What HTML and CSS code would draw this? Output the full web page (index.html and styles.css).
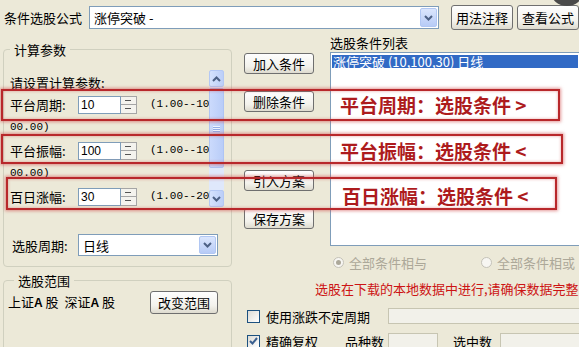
FILE: index.html
```html
<!DOCTYPE html>
<html lang="zh-CN">
<head>
    <meta charset="UTF-8" />
    <title>条件选股</title>
    <link rel="stylesheet" href="styles.css">
</head>
<body>
    <div class="top">
        <span class="top-label">条件选股公式</span>
        <div class="combo formula">
            <span class="combo-text">涨停突破 -</span>
            <span class="drop"><svg width="9" height="6" viewBox="0 0 9 6"><path d="M1 1l3.5 3.5L8 1" fill="none" stroke="#4d6185" stroke-width="2"/></svg></span>
        </div>
        <button class="btn top-btn btn-note">用法注释</button>
        <button class="btn top-btn">查看公式</button>
    </div>

    <div class="main">
        <div class="left">
            <fieldset class="group calc">
                <legend>计算参数</legend>
                <div class="param-panel">
                    <div class="param-list">
                        <div class="hint">请设置计算参数:</div>
                        <div class="param">
                            <span class="param-name">平台周期:</span>
                            <span class="num-input">10</span>
                            <span class="spin"><i></i><i></i></span>
                            <span class="range">(1.00--10</span>
                        </div>
                        <div class="range-tail">00.00)</div>
                        <div class="param">
                            <span class="param-name">平台振幅:</span>
                            <span class="num-input">100</span>
                            <span class="spin"><i></i><i></i></span>
                            <span class="range">(1.00--10</span>
                        </div>
                        <div class="range-tail">00.00)</div>
                        <div class="param">
                            <span class="param-name">百日涨幅:</span>
                            <span class="num-input">30</span>
                            <span class="spin"><i></i><i></i></span>
                            <span class="range">(1.00--20</span>
                        </div>
                    </div>
                    <div class="vscroll">
                        <span class="sb-btn"><svg width="9" height="6" viewBox="0 0 9 6"><path d="M1 5l3.5-3.5L8 5" fill="none" stroke="#4d6185" stroke-width="2"/></svg></span>
                        <span class="sb-track"><span class="sb-thumb"><i></i><i></i><i></i></span></span>
                        <span class="sb-btn"><svg width="9" height="6" viewBox="0 0 9 6"><path d="M1 1l3.5 3.5L8 1" fill="none" stroke="#4d6185" stroke-width="2"/></svg></span>
                    </div>
                </div>
                <div class="period">
                    <span class="param-name period-name">选股周期:</span>
                    <div class="combo period-combo">
                        <span class="combo-text">日线</span>
                        <span class="drop"><svg width="9" height="6" viewBox="0 0 9 6"><path d="M1 1l3.5 3.5L8 1" fill="none" stroke="#4d6185" stroke-width="2"/></svg></span>
                    </div>
                </div>
            </fieldset>

            <fieldset class="group scope-group">
                <legend>选股范围</legend>
                <div class="scope">
                    <span>上证<b>A</b> 股&nbsp;&nbsp;深证<b>A</b> 股</span>
                    <button class="btn scope-btn">改变范围</button>
                </div>
            </fieldset>
        </div>

        <div class="work">
            <div class="upper">
                <div class="actions">
                    <button class="btn act">加入条件</button>
                    <button class="btn act act-del">删除条件</button>
                    <button class="btn act">引入方案</button>
                    <button class="btn act">保存方案</button>
                </div>
                <div class="cond">
                    <div class="cond-title">选股条件列表</div>
                    <div class="cond-list">
                        <div class="cond-item">涨停突破 (10,100,30) 日线</div>
                    </div>
                </div>
            </div>

            <div class="lower">
                <div class="logic">
                    <label class="radio"><span class="dot on"></span>全部条件相与</label>
                    <label class="radio"><span class="dot"></span>全部条件相或</label>
                </div>
                <div class="notice">选股在下载的本地数据中进行,请确保数据完整</div>
                <div class="opt-row">
                    <span class="check"></span>
                    <span>使用涨跌不定周期</span>
                    <span class="field field-period"></span>
                </div>
                <div class="opt-row opt-row2">
                    <span class="check"><svg width="9" height="8" viewBox="0 0 9 8"><path d="M1 4l2.5 2.5L8 1" fill="none" stroke="#3a5f8f" stroke-width="2"/></svg></span>
                    <span>精确复权</span>
                    <span class="stat stat-kinds">品种数</span>
                    <span class="field field-small"></span>
                    <span class="stat stat-sel">选中数</span>
                    <span class="field field-sel"></span>
                </div>
            </div>
        </div>
    </div>

    <div class="mark mark-1"><span>平台周期：选股条件 &gt;</span></div>
    <div class="mark mark-2"><span>平台振幅：选股条件 &lt;</span></div>
    <div class="mark mark-3"><span>百日涨幅：选股条件 &lt;</span></div>
    <div class="corner"></div>
</body>
</html>
```

FILE: styles.css
```css
* {
    box-sizing: border-box;
}
body {
    margin: 0;
    width: 579px;
    height: 347px;
    overflow: hidden;
    position: relative;
    background: #ece9d8;
    color: #000;
    font: 13px/15px "Noto Sans CJK SC", "Noto Sans", sans-serif;
}
.top {
    display: flex;
    align-items: center;
    height: 35px;
    padding-left: 4px;
    white-space: nowrap;
}
.top-label {
    width: 86px;
}
.combo {
    display: flex;
    align-items: center;
    background: #fff;
    border: 1px solid #7f9db9;
}
.formula {
    width: 350px;
    height: 23px;
    flex: none;
}
.combo-text {
    flex: 1;
    padding-left: 4px;
}
.drop {
    width: 17px;
    height: 19px;
    margin-right: 1px;
    display: flex;
    align-items: center;
    justify-content: center;
    background: linear-gradient(#dbe6fd, #b7cbf6);
    border: 1px solid #b1c7f3;
    border-radius: 2px;
}
.btn {
    font: inherit;
    color: #000;
    background: linear-gradient(#fefefe, #f3f2ec 65%, #dedbcf);
    border: 1px solid #6f6f6f;
    border-radius: 3px;
    padding: 0;
    white-space: nowrap;
}
.top-btn {
    width: 62px;
    height: 25px;
    margin-left: 4px;
    flex: none;
}
.top .btn-note {
    margin-left: 12px;
}

.main {
    display: flex;
}
.left {
    width: 229px;
    margin-left: 3px;
    flex: none;
}
.group {
    margin: 0;
    padding: 0;
    border: 1px solid #d0d0bf;
    border-radius: 4px;
    min-width: 0;
}
.group legend {
    padding: 0 4px;
    margin-left: 6px;
    line-height: 15px;
}
.calc {
    margin-top: 7px;
    padding-bottom: 10px;
}
.param-panel {
    display: flex;
    width: 216px;
    height: 138px;
    margin: 12px 0 0 4px;
}
.param-list {
    flex: 1;
    overflow: hidden;
    padding-left: 2px;
    white-space: nowrap;
}
.hint {
    padding-top: 6px;
}
.param {
    display: flex;
    align-items: center;
    height: 23px;
    margin-top: 3px;
}
.range-tail + .param {
    margin-top: 4px;
}
.param-name {
    width: 68px;
    flex: none;
}
.num-input {
    width: 43px;
    height: 18px;
    flex: none;
    background: #fff;
    border: 1px solid #7f9db9;
    padding-left: 2px;
    font: 12px/16px "Liberation Sans", sans-serif;
}
.spin {
    width: 16px;
    height: 18px;
    flex: none;
    display: flex;
    flex-direction: column;
    border: 1px solid #a5a5a5;
    border-left: none;
    background: #f4f3ee;
}
.spin i {
    flex: 1;
    position: relative;
}
.spin i + i {
    border-top: 1px solid #a5a5a5;
}
.spin i::after {
    content: "";
    position: absolute;
    left: 4px;
    top: 3px;
    width: 6px;
    height: 1px;
    background: #555;
}
.range {
    margin-left: 13px;
    font: 11px/15px "Liberation Mono", monospace;
}
.range-tail {
    margin-top: 4px;
    font: 11px/15px "Liberation Mono", monospace;
}
.vscroll {
    width: 15px;
    flex: none;
    display: flex;
    flex-direction: column;
    margin-top: 1px;
}
.sb-btn {
    height: 17px;
    display: flex;
    align-items: center;
    justify-content: center;
    background: linear-gradient(90deg, #d5e2fd, #bccff8);
    border: 1px solid #b4c8f4;
    border-radius: 2px;
}
.sb-track {
    flex: 1;
    background: #dfe8fb;
    padding: 1px 0;
}
.sb-thumb {
    display: flex;
    flex-direction: column;
    align-items: center;
    justify-content: center;
    gap: 1px;
    height: 80px;
    background: linear-gradient(90deg, #cbdafc, #b9cdf8);
    border: 1px solid #aec4f4;
    border-radius: 2px;
}
.sb-thumb i {
    width: 7px;
    height: 1px;
    background: #eef3fe;
    box-shadow: 0 1px 0 #94aee8;
}
.period {
    display: flex;
    align-items: center;
    margin: 27px 0 0 8px;
}
.period-name {
    width: 66px;
}
.period-combo {
    width: 140px;
    height: 22px;
}
.period-combo .drop {
    height: 18px;
}
.scope-group {
    margin-top: 6px;
    padding: 0 13px 40px 4px;
}
.scope {
    display: flex;
    align-items: center;
    justify-content: space-between;
    margin-top: 3px;
}
.scope b {
    font-family: "Liberation Sans", sans-serif;
    font-size: 12px;
}
.scope-btn {
    width: 68px;
    height: 23px;
}

.work {
    flex: 1;
    margin-left: 12px;
    display: flex;
    flex-direction: column;
    min-width: 0;
}
.upper {
    display: flex;
    height: 211px;
}
.actions {
    width: 70px;
    flex: none;
    display: flex;
    flex-direction: column;
    padding-top: 18px;
}
.act {
    height: 24px;
    margin-bottom: 17px;
}
.act-del {
    margin-bottom: 58px;
}
.cond {
    margin-left: 16px;
    flex: 1;
}
.cond-title {
    line-height: 15px;
}
.cond-list {
    width: 252px;
    height: 194px;
    margin-top: 2px;
    background: #fff;
    border: 1px solid #7f9db9;
    padding: 2px 0 0 1px;
}
.cond-item {
    width: 246px;
    height: 13px;
    line-height: 13px;
    padding-left: 1px;
    background: #316ac5;
    color: #fff;
    white-space: nowrap;
}
.lower {
    white-space: nowrap;
}
.logic {
    display: flex;
    align-items: center;
    height: 16px;
    margin-top: 8px;
    padding-left: 89px;
    color: #aca899;
}
.radio {
    display: flex;
    align-items: center;
    width: 148px;
    flex: none;
}
.dot {
    width: 11px;
    height: 11px;
    margin-right: 5px;
    border: 1px solid #c4c2b8;
    border-radius: 50%;
    background: #f7f6f2;
    display: flex;
    align-items: center;
    justify-content: center;
}
.dot.on::after {
    content: "";
    width: 5px;
    height: 5px;
    border-radius: 50%;
    background: #aca899;
}
.notice {
    margin-top: 11px;
    padding-left: 71px;
    color: #cc1414;
    line-height: 15px;
}
.opt-row {
    display: flex;
    align-items: center;
    height: 16px;
    margin-top: 12px;
    padding-left: 3px;
}
.opt-row2 {
    margin-top: 9px;
}
.check {
    width: 13px;
    height: 13px;
    flex: none;
    margin-right: 6px;
    border: 1px solid #1c5180;
    background: linear-gradient(135deg, #dcdbd5, #fff);
    display: flex;
    align-items: center;
    justify-content: center;
}
.field {
    height: 16px;
    flex: none;
    background: #f2f1ea;
    border: 1px solid #c7c5b2;
}
.field-period {
    width: 220px;
    margin-left: 18px;
}
.stat-kinds {
    margin-left: 27px;
}
.field-small {
    width: 50px;
    margin-left: 4px;
}
.stat-sel {
    margin-left: 15px;
}
.field-sel {
    width: 100px;
    margin-left: 8px;
}

.mark {
    position: absolute;
    left: 1px;
    display: flex;
    align-items: center;
    padding-left: 337px;
    border: 2px solid #b8282b;
    box-shadow: 0 0 3px 1px rgba(205, 70, 70, 0.55), inset 0 0 3px rgba(205, 70, 70, 0.5);
}
.mark span {
    font: bold 19px/22px "Noto Sans CJK SC", sans-serif;
    color: #ad1b1d;
    text-shadow: 0 0 2px #fff;
    white-space: nowrap;
}
.mark-1 {
    top: 89px;
    width: 559px;
    height: 32px;
}
.mark-2 {
    top: 134px;
    width: 562px;
    height: 30px;
    padding-top: 4px;
}
.mark-3 {
    top: 177px;
    left: 6px;
    width: 551px;
    height: 33px;
    padding-left: 334px;
    padding-top: 5px;
}
.corner {
    position: absolute;
    top: -22px;
    left: 551px;
    width: 32px;
    height: 28px;
    border-radius: 50%;
    background: #4a4a4a;
}
```
